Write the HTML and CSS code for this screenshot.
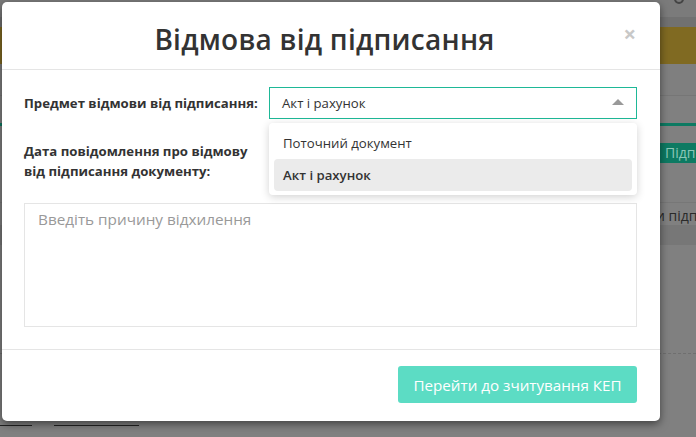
FILE: index.html
```html
<!DOCTYPE html>
<html lang="uk">
<head>
<meta charset="utf-8">
<link rel="stylesheet" href="styles.css">
</head>
<body>
<div class="page">
  <div class="topbar"><span class="topicon"></span></div>
  <div class="topbar2"></div>
  <div class="brand"></div>
  <div class="gap1"></div>
  <div class="gap2"></div>
  <div class="tealline"></div>
  <div class="btnrow"><span class="pagebtn">Підп</span></div>
  <div class="textrow">и підп</div>
  <div class="darkband"></div>
  <div class="space"></div>
  <div class="dashed"></div>
  <div class="space2"></div>
  <div class="bottomlines"><span class="bl1"></span><span class="bl2"></span></div>
</div>

<div class="modal">
  <div class="modal-header">
    <h1 class="modal-title">Відмова від підписання</h1>
    <span class="close">×</span>
  </div>
  <div class="modal-body">
    <div class="row row-subject">
      <div class="label">Предмет відмови від підписання:</div>
      <div class="select">
        <span class="select-value">Акт і рахунок</span>
        <span class="caret"></span>
      </div>
    </div>
    <div class="row row-date">
      <div class="label">Дата повідомлення про відмову<br>від підписання документу:</div>
    </div>
    <div class="textarea">Введіть причину відхилення</div>
  </div>
  <div class="modal-footer">
    <button class="btn">Перейти до зчитування КЕП</button>
  </div>
  <div class="dropdown">
    <div class="option">Поточний документ</div>
    <div class="option selected">Акт і рахунок</div>
  </div>
</div>
</body>
</html>
```

FILE: styles.css
```css
* { box-sizing: border-box; }
html, body { margin: 0; padding: 0; }
body {
  width: 696px;
  height: 437px;
  overflow: hidden;
  background: #808080;
  font-family: "Open Sans", "Noto Sans", sans-serif;
  position: relative;
}
.page { display: flex; flex-direction: column; }
.topbar { height: 17px; background: #7b7b7b; position: relative; }
.topicon { position: absolute; right: 12px; top: -6px; width: 10px; height: 10px; border: 2px solid #444; border-radius: 50%; }
.topbar2 { height: 10px; background: #717171; }
.brand { height: 37px; background: #806a22; }
.gap1 { height: 32px; border-bottom: 1px solid #767676; background: #7f7f7f; }
.gap2 { height: 27px; }
.tealline { height: 3px; background: #0d7a62; }
.btnrow { height: 77px; padding-top: 17px; display: flex; justify-content: flex-end; border-bottom: 1px solid #777; }
.pagebtn { background: #0d7a62; color: #8cc7b8; height: 20px; line-height: 20px; font-size: 14px; width: 38px; padding-left: 7px; overflow: hidden; white-space: nowrap; }
.textrow { height: 22px; font-size: 14px; color: #2a2a2a; padding-left: 656px; white-space: nowrap; line-height: 26px; }
.darkband { height: 20px; background: #777; }
.space { height: 108px; }
.dashed { height: 0; border-top: 1px dashed #6f6f6f; }
.space2 { height: 71px; }
.bottomlines { height: 2px; position: relative; }
.bl1 { position: absolute; left: 0; width: 32px; top: 0; height: 1px; background: #222; }
.bl2 { position: absolute; left: 54px; width: 85px; top: 0; height: 1px; background: #222; }

.modal {
  position: absolute;
  left: 2px;
  top: 2px;
  width: 658px;
  height: 419px;
  background: #fff;
  border-radius: 5px;
  box-shadow: 0 3px 9px rgba(0,0,0,0.5);
  display: flex;
  flex-direction: column;
}
.modal-header {
  height: 68px;
  border-bottom: 1px solid #e5e5e5;
  position: relative;
  display: flex;
  align-items: center;
  justify-content: center;
  padding-right: 13px;
}
.modal-title {
  margin: 0;
  font-size: 28px;
  font-weight: 600;
  color: #333;
  letter-spacing: 0.25px;
  line-height: 40px;
  padding-top: 6px;
}
.close {
  position: absolute;
  right: 24px;
  top: 17px;
  font-size: 22px;
  font-weight: 700;
  color: #c8c8c8;
  line-height: 28px;
}
.modal-body {
  padding: 17px 23px 0 22px;
  display: flex;
  flex-direction: column;
  height: 280px;
  border-bottom: 1px solid #e5e5e5;
}
.row { display: flex; align-items: center; }
.label {
  font-size: 13.2px;
  font-weight: 700;
  color: #333;
  line-height: 20px;
}
.row-subject { justify-content: space-between; }
.select {
  width: 368px;
  height: 32px;
  border: 1px solid #1eb897;
  display: flex;
  align-items: center;
  justify-content: space-between;
  padding: 0 12px 0 12px;
}
.select-value { font-size: 13.2px; color: #333; }
.caret {
  width: 0; height: 0;
  border-left: 6px solid transparent;
  border-right: 6px solid transparent;
  border-bottom: 6px solid #999;
  margin-top: -2px;
}
.row-date { margin-top: 22px; }
.textarea {
  margin-top: 22px;
  height: 124px;
  border: 1px solid #e5e5e5;
  padding: 4px 13px;
  font-size: 15.3px;
  color: #999;
  line-height: 22px;
}
.modal-footer {
  flex: 1;
  display: flex;
  justify-content: flex-end;
  align-items: flex-start;
  padding: 16px 23px 0 0;
}
.btn {
  width: 239px;
  height: 37px;
  background: #5cdcc4;
  border: none;
  border-radius: 3px;
  color: #fff;
  font-family: "Open Sans", "Noto Sans", sans-serif;
  font-size: 15.2px;
  padding: 0;
}
.dropdown {
  position: absolute;
  left: 267px;
  top: 121px;
  width: 368px;
  background: #fff;
  border-radius: 4px;
  box-shadow: 0 2px 8px rgba(0,0,0,0.18);
  padding: 4px 5px;
}
.option {
  height: 32px;
  line-height: 32px;
  padding-left: 9px;
  font-size: 13.2px;
  color: #333;
  border-radius: 4px;
}
.option.selected { background: #ebebeb; font-weight: 600; }
```
